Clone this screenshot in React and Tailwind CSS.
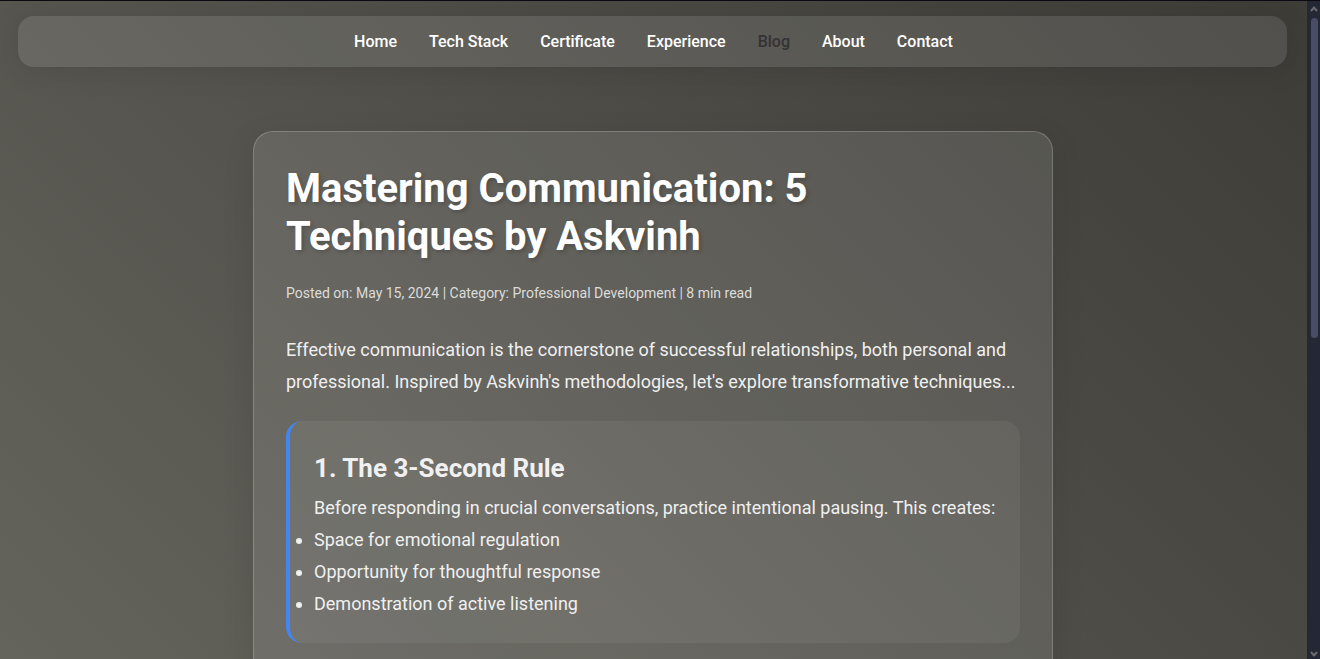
import React from "react";

const links = ["Home", "Tech Stack", "Certificate", "Experience", "Blog", "About", "Contact"];

const points = [
  "Space for emotional regulation",
  "Opportunity for thoughtful response",
  "Demonstration of active listening",
];

function NavBar() {
  return (
    <nav
      aria-label="Main"
      className="mt-[15px] mr-5 ml-[18px] rounded-2xl bg-white/10 pt-3.5 pr-8 pb-[13px] pl-[34px] shadow-[0_4px_30px_rgba(0,0,0,0.1)]"
    >
      <ul className="flex justify-center gap-8">
        {links.map((label) => (
          <li key={label}>
            <a
              href={"#" + label.toLowerCase().replace(" ", "-")}
              aria-current={label === "Blog" ? "page" : undefined}
              className={
                label === "Blog"
                  ? "text-base leading-6 font-medium text-[#333333]"
                  : "text-base leading-6 font-medium text-white"
              }
            >
              {label}
            </a>
          </li>
        ))}
      </ul>
    </nav>
  );
}

function Article() {
  return (
    <article className="mx-auto mt-16 w-full max-w-[800px] rounded-[20px] border border-white/20 bg-white/10 px-8 pt-[33px] pb-16 text-[#f0f0f0] shadow-[0_8px_32px_rgba(0,0,0,0.1)]">
      <h1 className="text-[40px] leading-12 font-bold text-white [text-shadow:2px_2px_4px_rgba(0,0,0,0.2)]">
        Mastering Communication: 5 Techniques by Askvinh
      </h1>
      <p className="mt-5 text-sm leading-6 text-[#dcdcda]">
        Posted on: May 15, 2024 | Category: Professional Development | 8 min read
      </p>
      <p className="mt-[29px] text-lg leading-8">
        Effective communication is the cornerstone of successful relationships, both personal and
        professional. Inspired by Askvinh's methodologies, let's explore transformative
        techniques...
      </p>
      <section className="mt-[23px] rounded-2xl border-l-4 border-[#4285f4] bg-white/5 px-6 py-[23px]">
        <h2 className="text-[26px] leading-12 font-bold">1. The 3-Second Rule</h2>
        <p className="text-lg leading-8">
          Before responding in crucial conversations, practice intentional pausing. This creates:
        </p>
        <ul className="list-outside list-disc text-lg leading-8">
          {points.map((point) => (
            <li key={point}>{point}</li>
          ))}
        </ul>
      </section>
    </article>
  );
}

function ScrollTrack() {
  return (
    <div aria-hidden="true" className="flex w-[13px] shrink-0 flex-col items-center bg-[#242834] pt-1 pl-px">
      <svg className="shrink-0" width="8" height="8" viewBox="0 0 8 8" fill="none" stroke="#6b6b6b" strokeWidth="2">
        <path d="M1 6L4 2.5L7 6" />
      </svg>
      <div className="mt-[5px] h-[49%] w-[7px] rounded-full bg-[#484c64]" />
      <svg className="mt-auto mb-px shrink-0" width="8" height="8" viewBox="0 0 8 8" fill="none" stroke="#6b6b6b" strokeWidth="2">
        <path d="M1 2L4 5.5L7 2" />
      </svg>
    </div>
  );
}

export default function App() {
  return (
    <div className="flex h-screen overflow-hidden border-t border-[#0b0912] font-[Roboto,sans-serif]">
      <main className="min-w-0 flex-1 overflow-hidden bg-linear-45 from-[#64635c] to-[#3d3c37]">
        <NavBar />
        <div className="pr-px">
          <Article />
        </div>
      </main>
      <ScrollTrack />
    </div>
  );
}
